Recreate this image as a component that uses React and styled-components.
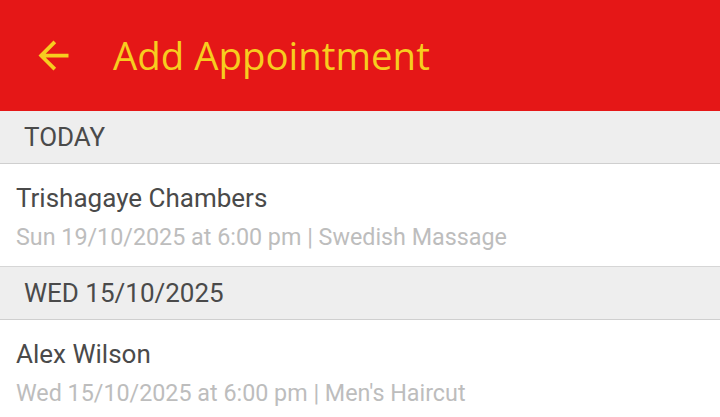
import React from "react";
import styled, { createGlobalStyle } from "styled-components";

const Global = createGlobalStyle`
  html, body { margin: 0; padding: 0; background: #fff; }
  body { font-family: Roboto, "Noto Sans", sans-serif; }
  * { box-sizing: border-box; }
`;

const Screen = styled.div`
  width: 720px;
  height: 417px;
  overflow: hidden;
  background: #fff;
`;

const AppBar = styled.header`
  height: 111px;
  background: #e51717;
  display: flex;
  align-items: center;
  padding-left: 31px;
`;

const BackButton = styled.button`
  width: 45px;
  height: 45px;
  padding: 0;
  border: 0;
  background: transparent;
  display: flex;
  align-items: center;
  justify-content: center;
  color: #f7cd1f;
  svg { display: block; }
`;

const Title = styled.h1`
  margin: 0 0 0 37px;
  font-family: "Open Sans", "Noto Sans", sans-serif;
  font-weight: 400;
  font-size: 38.4px;
  color: #f7cd1f;
  line-height: 1;
`;

const SectionHeader = styled.div`
  height: 53px;
  background: #eeeeee;
  border-bottom: 1px solid #cfcfcf;
  display: flex;
  align-items: center;
  padding-left: 24px;
  font-size: 26px;
  color: #4a4a4a;
  text-transform: uppercase;
`;

const Row = styled.div`
  height: 103px;
  border-bottom: 1px solid #d6d6d6;
  padding: 20px 16px 0;
  display: flex;
  flex-direction: column;
`;

const Name = styled.div`
  font-size: 26px;
  line-height: 28px;
  color: #4a4a4a;
`;

const Detail = styled.div`
  margin-top: 12px;
  font-size: 23.3px;
  line-height: 26px;
  color: #bdbdbd;
`;

const data = [
  {
    section: "Today",
    name: "Trishagaye Chambers",
    detail: "Sun 19/10/2025 at 6:00 pm | Swedish Massage",
  },
  {
    section: "Wed 15/10/2025",
    name: "Alex Wilson",
    detail: "Wed 15/10/2025 at 6:00 pm | Men's Haircut",
  },
];

export default function App() {
  return (
    <Screen>
      <Global />
      <AppBar>
        <BackButton aria-label="Back">
          <svg width="45" height="45" viewBox="0 0 24 24" fill="currentColor">
            <path d="M20 11H7.83l5.59-5.59L12 4l-8 8 8 8 1.41-1.41L7.83 13H20v-2z" />
          </svg>
        </BackButton>
        <Title>Add Appointment</Title>
      </AppBar>
      {data.map((d) => (
        <React.Fragment key={d.name}>
          <SectionHeader>{d.section}</SectionHeader>
          <Row>
            <Name>{d.name}</Name>
            <Detail>{d.detail}</Detail>
          </Row>
        </React.Fragment>
      ))}
    </Screen>
  );
}
